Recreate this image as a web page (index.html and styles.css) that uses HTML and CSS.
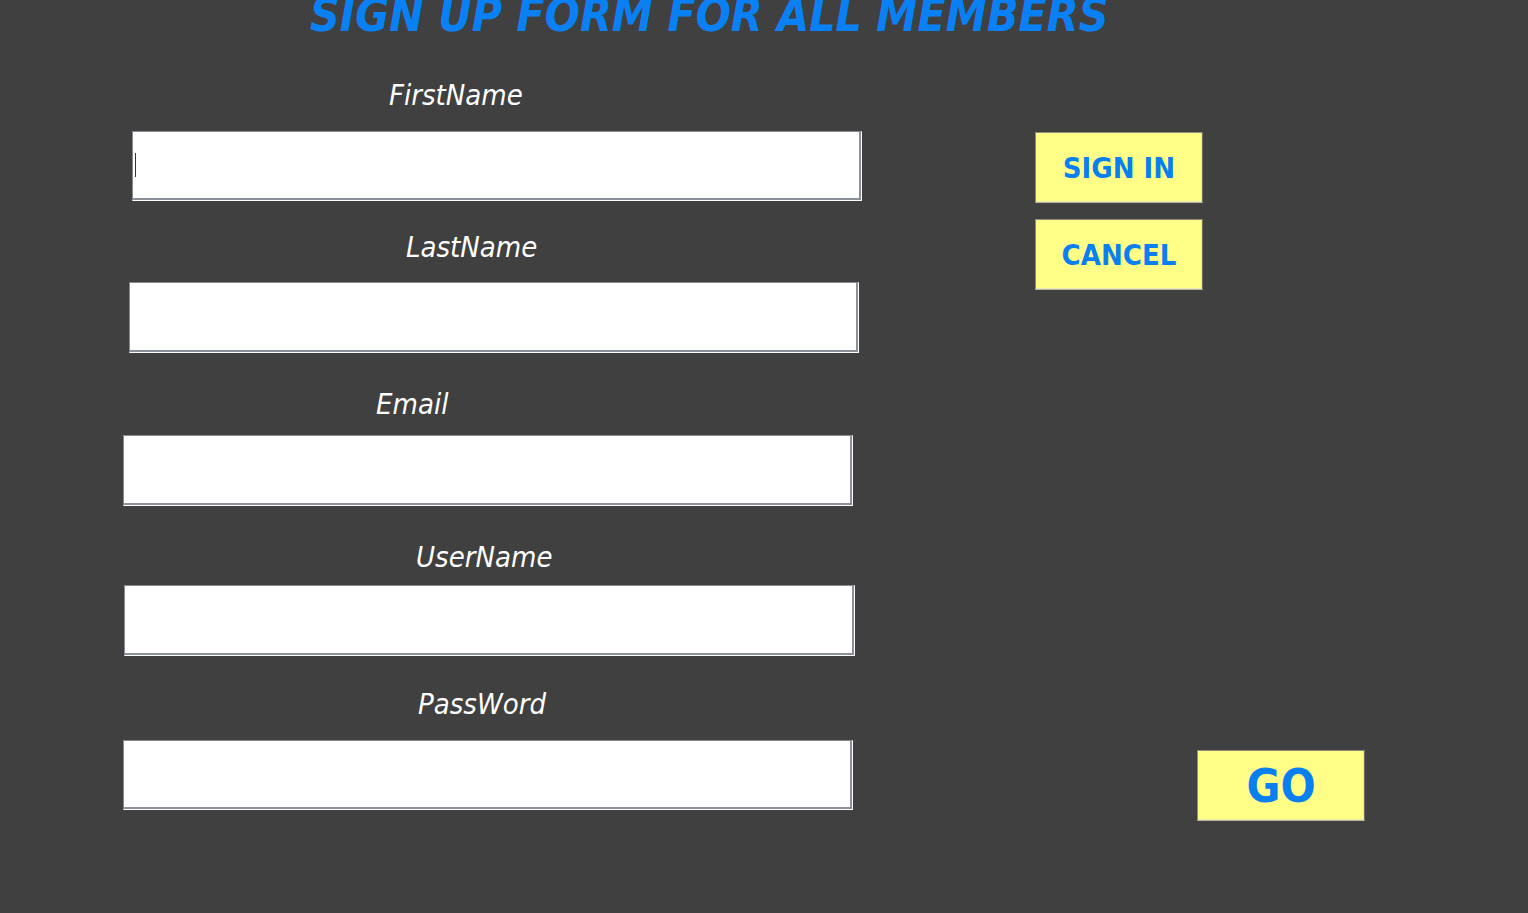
FILE: index.html
```html
<!DOCTYPE html>
<html>
<head>
<meta charset="utf-8">
<title>Sign Up</title>
<link rel="stylesheet" href="styles.css">
</head>
<body>
<h1 class="title">SIGN UP FORM FOR ALL MEMBERS</h1>
<div class="main">
  <form class="form">
    <div class="field field-first">
      <label class="label">FirstName</label>
      <div class="box"><input class="input" type="text"><span class="caret"></span></div>
    </div>
    <div class="field field-last">
      <label class="label">LastName</label>
      <div class="box"><input class="input" type="text"></div>
    </div>
    <div class="field field-email">
      <label class="label">Email</label>
      <div class="box"><input class="input" type="text"></div>
    </div>
    <div class="field field-user">
      <label class="label">UserName</label>
      <div class="box"><input class="input" type="text"></div>
    </div>
    <div class="field field-pass">
      <label class="label">PassWord</label>
      <div class="box"><input class="input" type="password"></div>
    </div>
  </form>
  <div class="side">
    <div class="side-top">
      <button class="btn btn-small" type="button">SIGN IN</button>
      <button class="btn btn-small" type="button">CANCEL</button>
    </div>
    <button class="btn btn-go" type="button">GO</button>
  </div>
</div>
</body>
</html>
```
FILE: styles.css
```css
html, body {
  margin: 0;
  padding: 0;
}
body {
  background: #404040;
  font-family: "DejaVu Sans Condensed", "DejaVu Sans", sans-serif;
  font-stretch: condensed;
  width: 1528px;
  height: 913px;
  overflow: hidden;
}
.title {
  margin: -8px 0 0 0;
  padding-left: 310px;
  font-size: 46px;
  line-height: 46px;
  font-weight: bold;
  font-style: italic;
  color: #0a80f5;
  white-space: nowrap;
}
.main {
  display: flex;
  align-items: flex-start;
}
.form {
  display: flex;
  flex-direction: column;
  width: 900px;
}
.field {
  display: flex;
  flex-direction: column;
}
.label {
  color: #ffffff;
  font-style: italic;
  font-size: 29px;
  line-height: 28px;
  margin-bottom: 4px;
  white-space: nowrap;
}
.box {
  position: relative;
  width: 730px;
  height: 70px;
}
.input {
  display: block;
  box-sizing: border-box;
  width: 100%;
  height: 100%;
  margin: 0;
  padding: 0;
  background: #ffffff;
  border: 1px solid;
  border-color: #868b92 #ffffff #ffffff #868b92;
  box-shadow: inset -2px -2px 0 #8b9098;
  outline: none;
}
.caret {
  position: absolute;
  left: 3px;
  top: 22px;
  width: 1px;
  height: 24px;
  background: #333;
}
.field-first { margin-top: 43px; }
.field-first .label { padding-left: 389px; }
.field-first .box { margin-left: 132px; margin-top: 18px; }

.field-last { margin-top: 32px; }
.field-last .label { padding-left: 406px; }
.field-last .box { margin-left: 129px; margin-top: 17px; height: 71px; }

.field-email { margin-top: 37px; }
.field-email .label { padding-left: 376px; }
.field-email .box { margin-left: 123px; margin-top: 13px; height: 71px; }

.field-user { margin-top: 37px; }
.field-user .label { padding-left: 416px; }
.field-user .box { margin-left: 124px; margin-top: 10px; height: 71px; width: 731px; }

.field-pass { margin-top: 34px; }
.field-pass .label { padding-left: 418px; }
.field-pass .box { margin-left: 123px; margin-top: 18px; }

.side {
  display: flex;
  flex-direction: column;
  margin-left: 135px;
  margin-top: 94px;
  width: 330px;
}
.side-top {
  display: flex;
  flex-direction: column;
  gap: 16px;
}
.btn {
  box-sizing: border-box;
  width: 168px;
  height: 71px;
  margin: 0;
  padding: 0;
  background: #ffff88;
  color: #0a7ff0;
  font-family: "DejaVu Sans Condensed", "DejaVu Sans", sans-serif;
  font-stretch: condensed;
  font-weight: bold;
  border: 1px solid;
  border-color: #8c8c78 #6e6e60 #b8b8a0 #8c8c78;
  box-shadow: inset -1px -1px 0 #e8e8b0;
  cursor: pointer;
}
.btn-small {
  font-size: 29px;
}
.btn-go {
  margin-top: 460px;
  margin-left: 162px;
  font-size: 46px;
}
```
